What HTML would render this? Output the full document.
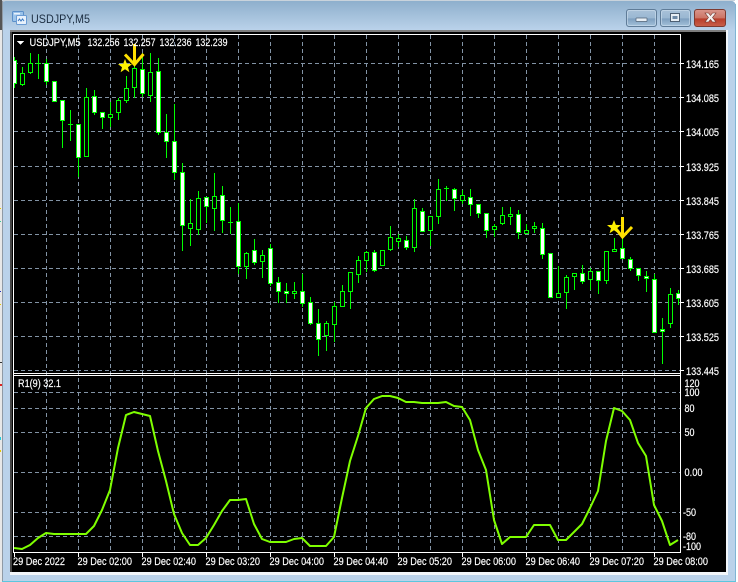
<!DOCTYPE html>
<html><head><meta charset="utf-8"><title>USDJPY,M5</title>
<style>
html,body{margin:0;padding:0;background:#fff;width:738px;height:582px;overflow:hidden}
svg{display:block}
text{font-family:"Liberation Sans",sans-serif;font-size:11px;fill:#fff;stroke:#fff;stroke-width:.18px}
</style></head><body>
<svg width="738" height="582" viewBox="0 0 738 582" xmlns="http://www.w3.org/2000/svg">
<defs>
<linearGradient id="top" x1="0" y1="0" x2="0" y2="1"><stop offset="0" stop-color="#8eafcc"/><stop offset="1" stop-color="#bad2ea"/></linearGradient>
<linearGradient id="btn" x1="0" y1="0" x2="0" y2="1"><stop offset="0" stop-color="#a9c2d9"/><stop offset=".5" stop-color="#9ab7d2"/><stop offset=".55" stop-color="#7e9fbf"/><stop offset="1" stop-color="#a5c3dc"/></linearGradient>
<linearGradient id="cls" x1="0" y1="0" x2="0" y2="1"><stop offset="0" stop-color="#d9968c"/><stop offset=".5" stop-color="#cc7465"/><stop offset=".55" stop-color="#b83d2a"/><stop offset="1" stop-color="#c9604a"/></linearGradient>
<clipPath id="cu"><rect x="14" y="35" width="666" height="338"/></clipPath>
<clipPath id="cl"><rect x="14" y="376" width="666" height="176"/></clipPath>
</defs>
<!-- window -->
<rect width="738" height="582" fill="#fff"/>
<path d="M0 0H4L2 4V30H0Z" fill="#555"/>
<rect x="0" y="30" width="2" height="552" fill="#e8e8e8"/>
<g shape-rendering="crispEdges">
<rect x="0" y="208" width="1" height="1" fill="#e6c800"/><rect x="0" y="221" width="1" height="1" fill="#3c9"/><rect x="0" y="291" width="1" height="1" fill="#23b"/><rect x="0" y="304" width="1" height="1" fill="#e6c800"/><rect x="0" y="362" width="2" height="1" fill="#333"/><rect x="0" y="384" width="2" height="2" fill="#d22"/><rect x="0" y="437" width="1" height="3" fill="#2cd"/><rect x="0" y="450" width="1" height="2" fill="#e6c800"/>
</g>
<path d="M2 581V5Q2 1 6 1H731Q735 1 735.500 5V581Z" fill="#bad2ea"/>
<path d="M2 30V5Q2 1 6 1H731Q735 1 735.500 5V30Z" fill="url(#top)"/>
<rect x="2" y="0" width="733" height="1" fill="#c9d3dc"/>
<rect x="2" y="581" width="734" height="1" fill="#5cc6de"/>
<rect x="2" y="1" width="1" height="580" fill="#8f9aa5"/>
<rect x="735" y="4" width="1" height="577" fill="#7fb5d5"/>
<rect x="10" y="30" width="717" height="2" fill="#7d7d7d"/>
<rect x="10" y="32" width="717" height="541" fill="#000"/>
<rect x="10" y="32" width="2" height="541" fill="#444"/>
<rect x="10" y="572" width="717" height="3" fill="#f2f6fa"/>
<rect x="726" y="30" width="2" height="545" fill="#f2f6fa"/>
<!-- title -->
<rect x="12.500" y="11.500" width="11" height="10" rx="1" fill="#9cc4ea" stroke="#5b8fc9"/>
<rect x="16.500" y="15.500" width="10" height="9" rx="1" fill="#e8f1fb" stroke="#6a9bd3"/>
<path d="M18 21l1.500-2 1.500 2 1.500-2 1.500 2" fill="none" stroke="#3a78c0"/>
<rect x="14" y="13" width="6" height="1.500" fill="#e8f1fb"/>
<text x="31" y="23" textLength="59" lengthAdjust="spacingAndGlyphs" style="fill:#1c2e42;stroke:none;font-size:12px">USDJPY,M5</text>
<!-- buttons -->
<rect x="626.500" y="9.500" width="30" height="17" rx="2.500" fill="url(#btn)" stroke="#5f7c98"/>
<rect x="627.500" y="10.500" width="28" height="15" rx="2" fill="none" stroke="#cfe0ef" stroke-opacity=".6"/>
<rect x="636" y="18" width="11" height="3.500" rx=".5" fill="#e8eff5" stroke="#4d6074" stroke-width=".7"/>
<rect x="660.500" y="9.500" width="30" height="17" rx="2.500" fill="url(#btn)" stroke="#5f7c98"/>
<rect x="661.500" y="10.500" width="28" height="15" rx="2" fill="none" stroke="#cfe0ef" stroke-opacity=".6"/>
<rect x="670.500" y="13.500" width="9" height="8" fill="#e8eff5" stroke="#4d6074"/>
<rect x="672.500" y="16" width="5" height="3" fill="#6d89a6"/>
<rect x="694.500" y="9.500" width="31" height="17" rx="2.500" fill="url(#cls)" stroke="#7d3a30"/>
<path d="M705 13h3.500l2 2.500 2-2.500h3.500l-3.500 4.500 3.500 4.500h-3.500l-2-2.500-2 2.500H705l3.500-4.500z" fill="#f4f0ef" stroke="#6d3028" stroke-width=".6"/>
<!-- grid -->
<g stroke="#8293a5" stroke-dasharray="4 3" fill="none" shape-rendering="crispEdges">
<path d="M14 63.500H680M14 97.500H680M14 131.500H680M14 166.500H680M14 200.500H680M14 234.500H680M14 268.500H680M14 302.500H680M14 336.500H680M14 370.500H680"/>
<path d="M14 392.500H680M14 408.500H680M14 432.500H680M14 472.500H680M14 512.500H680M14 536.500H680"/>
<path d="M46.500 35V552M78.500 35V552M110.500 35V552M142.500 35V552M174.500 35V552M206.500 35V552M238.500 35V552M270.500 35V552M302.500 35V552M334.500 35V552M366.500 35V552M398.500 35V552M430.500 35V552M462.500 35V552M494.500 35V552M526.500 35V552M558.500 35V552M590.500 35V552M622.500 35V552M654.500 35V552"/>
</g>
<!-- candles -->
<g clip-path="url(#cu)" shape-rendering="crispEdges" stroke="#00ff00">
<path fill="none" d="M14.500 57V88M22.500 67V86M30.500 53V74M38.500 54V79M46.500 59V85M62.500 100V148M70.500 110V141M78.500 124V177M86.500 88V157M94.500 90V115M102.500 112V129M110.500 102V127M118.500 98V120M126.500 76V103M134.500 60V98M142.500 53V97M150.500 53V102M158.500 58V135M166.500 114V158M174.500 104V180M182.500 163V251M190.500 199V246M198.500 191V235M206.500 197V223M214.500 173V231M222.500 186V233M230.500 207V234M238.500 203V274M246.500 252V279M254.500 239V265M262.500 250V278M270.500 244V286M278.500 277V303M286.500 283V303M294.500 282V299M302.500 274V307M310.500 297V325M318.500 309V356M326.500 321V351M334.500 302V342M342.500 285V307M350.500 272V309M358.500 256V283M366.500 251V272M374.500 250V272M390.500 226V251M398.500 234V247M406.500 236V250M414.500 199V252M422.500 208V232M430.500 216V246M438.500 179V224M446.500 186V201M454.500 188V211M462.500 190V204M470.500 189V216M478.500 204V218M486.500 213V238M494.500 224V237M502.500 207V225M510.500 207V225M518.500 210V239M526.500 224V234M534.500 222V233M542.500 223V259M558.500 266V298M566.500 275V309M574.500 273V290M582.500 265V284M590.500 268V290M598.500 271V294M606.500 251V284M614.500 238V252M622.500 237V259M630.500 257V271M638.500 268V281M646.500 271V292M654.500 274V333M662.500 318V364M670.500 288V328M678.500 290V305"/>
<path fill="none" d="M36 63.500H41M68 124.500H73M228 222.500H233M444 188.500H449"/>
<path fill="#000" d="M20.500 73.500h4v11h-4zM28.500 63.500h4v9h-4zM84.500 97.500h4v59h-4zM108.500 114.500h4v3h-4zM116.500 100.500h4v12h-4zM124.500 88.500h4v12h-4zM132.500 68.500h4v19h-4zM148.500 72.500h4v23h-4zM188.500 223.500h4v5h-4zM196.500 198.500h4v31h-4zM212.500 196.500h4v12h-4zM244.500 253.500h4v13h-4zM260.500 255.500h4v6h-4zM292.500 291.500h4v2h-4zM324.500 323.500h4v12h-4zM332.500 306.500h4v18h-4zM340.500 291.500h4v15h-4zM348.500 272.500h4v19h-4zM356.500 260.500h4v14h-4zM364.500 252.500h4v8h-4zM380.500 250.500h4v15h-4zM388.500 237.500h4v12h-4zM396.500 238.500h4v3h-4zM412.500 208.500h4v39h-4zM428.500 216.500h4v14h-4zM436.500 189.500h4v27h-4zM460.500 195.500h4v5h-4zM492.500 226.500h4v3h-4zM500.500 215.500h4v8h-4zM508.500 214.500h4v2h-4zM524.500 230.500h4v3h-4zM532.500 226.500h4v2h-4zM556.500 293.500h4v4h-4zM564.500 277.500h4v15h-4zM572.500 273.500h4v3h-4zM588.500 271.500h4v8h-4zM604.500 251.500h4v29h-4zM612.500 249.500h4v2h-4zM668.500 294.500h4v29h-4z"/>
<path fill="#fff" d="M12.500 60.500h4v23h-4zM44.500 63.500h4v18h-4zM52.500 81.500h4v20h-4zM60.500 100.500h4v20h-4zM76.500 124.500h4v33h-4zM92.500 96.500h4v16h-4zM100.500 112.500h4v5h-4zM140.500 69.500h4v24h-4zM156.500 71.500h4v61h-4zM164.500 132.500h4v9h-4zM172.500 141.500h4v31h-4zM180.500 172.500h4v53h-4zM204.500 197.500h4v9h-4zM220.500 195.500h4v25h-4zM236.500 221.500h4v45h-4zM252.500 250.500h4v12h-4zM268.500 248.500h4v35h-4zM276.500 282.500h4v9h-4zM284.500 291.500h4v2h-4zM300.500 291.500h4v12h-4zM308.500 302.500h4v21h-4zM316.500 323.500h4v16h-4zM372.500 252.500h4v18h-4zM404.500 240.500h4v7h-4zM420.500 211.500h4v20h-4zM452.500 189.500h4v9h-4zM468.500 197.500h4v7h-4zM476.500 204.500h4v9h-4zM484.500 213.500h4v17h-4zM516.500 214.500h4v18h-4zM540.500 228.500h4v26h-4zM548.500 253.500h4v44h-4zM580.500 273.500h4v8h-4zM596.500 271.500h4v9h-4zM620.500 248.500h4v10h-4zM628.500 259.500h4v9h-4zM636.500 268.500h4v7h-4zM644.500 276.500h4v2h-4zM652.500 279.500h4v53h-4zM660.500 329.500h4v2h-4zM676.500 293.500h4v5h-4z"/>
</g>
<!-- signals -->
<g fill="none" stroke="#ffe000" stroke-width="3">
<path d="M134.500 44V65"/><path d="M125 54.500L134.500 64.500L143.500 54"/>
<path d="M622.500 217V237"/><path d="M615 227.500L622.500 237L632 227"/>
</g>
<path fill="#fff200" d="M125 59l1.900 4.900 5.100.2-4 3.100 1.400 5-4.400-2.900-4.400 2.900 1.400-5-4-3.100 5.100-.2z"/>
<path fill="#fff200" d="M614 220l1.900 4.900 5.100.2-4 3.100 1.400 5-4.400-2.900-4.400 2.900 1.400-5-4-3.100 5.100-.2z"/>
<!-- indicator line -->
<path clip-path="url(#cl)" fill="none" stroke="#7fff00" stroke-width="2" stroke-linejoin="round" d="M14 548L22 549L30 545L38 538L46 533L54 534L62 534L70 534L78 534L86 534L94 526L102 510L110 490L118 448L126 415L134 412L142 414L150 416L158 451L166 481L174 514L182 533L190 545L198 545L206 538L214 525L222 511L230 500L238 500L246 499L254 524L262 539L270 542L278 542L286 542L294 539L302 538L310 546L318 546L326 546L334 537L342 498L350 461L358 436L366 408L374 399L382 396L390 396L398 398L406 402L414 402L422 403L430 403L438 403L446 402L454 406L462 407L470 420L478 450L486 470L494 520L502 544L510 537L518 537L526 537L534 525L542 525L550 525L558 540L566 540L574 532L582 524L590 508L598 491L606 441L614 408L622 411L630 420L638 443L646 456L654 505L662 521L670 545L678 540"/>
<!-- frame -->
<g fill="#fff" shape-rendering="crispEdges">
<rect x="13" y="34" width="668" height="1"/>
<rect x="13" y="34" width="1" height="519"/>
<rect x="680" y="34" width="1" height="519"/>
<rect x="13" y="373" width="668" height="1"/>
<rect x="13" y="375" width="668" height="1"/>
<rect x="13" y="552" width="668" height="1"/>
<path d="M681 63h3v1h-3zM681 97h3v1h-3zM681 131h3v1h-3zM681 166h3v1h-3zM681 200h3v1h-3zM681 234h3v1h-3zM681 268h3v1h-3zM681 302h3v1h-3zM681 336h3v1h-3zM681 370h3v1h-3z"/>
<path d="M14 553h1v4h-1zM78 553h1v4h-1zM142 553h1v4h-1zM206 553h1v4h-1zM270 553h1v4h-1zM334 553h1v4h-1zM398 553h1v4h-1zM462 553h1v4h-1zM526 553h1v4h-1zM590 553h1v4h-1zM654 553h1v4h-1z"/>
<path d="M17 41h7l-3.500 4z"/>
</g>
<!-- header -->
<text x="29.500" y="46" textLength="51" lengthAdjust="spacingAndGlyphs">USDJPY,M5</text>
<text x="87.500" y="46" textLength="32" lengthAdjust="spacingAndGlyphs">132.256</text>
<text x="123.500" y="46" textLength="32" lengthAdjust="spacingAndGlyphs">132.257</text>
<text x="159.500" y="46" textLength="32" lengthAdjust="spacingAndGlyphs">132.236</text>
<text x="195.500" y="46" textLength="32" lengthAdjust="spacingAndGlyphs">132.239</text>
<text x="18" y="387" textLength="43" lengthAdjust="spacingAndGlyphs">R1(9) 32.1</text>
<!-- price axis -->
<g>
<text x="686" y="68" textLength="33" lengthAdjust="spacingAndGlyphs">134.165</text>
<text x="686" y="102" textLength="33" lengthAdjust="spacingAndGlyphs">134.085</text>
<text x="686" y="136" textLength="33" lengthAdjust="spacingAndGlyphs">134.005</text>
<text x="686" y="171" textLength="33" lengthAdjust="spacingAndGlyphs">133.925</text>
<text x="686" y="205" textLength="33" lengthAdjust="spacingAndGlyphs">133.845</text>
<text x="686" y="239" textLength="33" lengthAdjust="spacingAndGlyphs">133.765</text>
<text x="686" y="273" textLength="33" lengthAdjust="spacingAndGlyphs">133.685</text>
<text x="686" y="307" textLength="33" lengthAdjust="spacingAndGlyphs">133.605</text>
<text x="686" y="341" textLength="33" lengthAdjust="spacingAndGlyphs">133.525</text>
<text x="686" y="375" textLength="33" lengthAdjust="spacingAndGlyphs">133.445</text>
<text x="684.500" y="387" textLength="15" lengthAdjust="spacingAndGlyphs">120</text>
<text x="684.500" y="396" textLength="15" lengthAdjust="spacingAndGlyphs">100</text>
<text x="684.500" y="412" textLength="10" lengthAdjust="spacingAndGlyphs">80</text>
<text x="684.500" y="436" textLength="10" lengthAdjust="spacingAndGlyphs">50</text>
<text x="684.500" y="476" textLength="18" lengthAdjust="spacingAndGlyphs">0.00</text>
<text x="683" y="516" textLength="13" lengthAdjust="spacingAndGlyphs">-50</text>
<text x="683" y="540" textLength="13" lengthAdjust="spacingAndGlyphs">-80</text>
<text x="683" y="550" textLength="18" lengthAdjust="spacingAndGlyphs">-100</text>
</g>
<!-- time axis -->
<g>
<text x="13" y="565" textLength="52" lengthAdjust="spacingAndGlyphs">29 Dec 2022</text>
<text x="77.500" y="565" textLength="54.500" lengthAdjust="spacingAndGlyphs">29 Dec 02:00</text>
<text x="141.500" y="565" textLength="54.500" lengthAdjust="spacingAndGlyphs">29 Dec 02:40</text>
<text x="205.500" y="565" textLength="54.500" lengthAdjust="spacingAndGlyphs">29 Dec 03:20</text>
<text x="269.500" y="565" textLength="54.500" lengthAdjust="spacingAndGlyphs">29 Dec 04:00</text>
<text x="333.500" y="565" textLength="54.500" lengthAdjust="spacingAndGlyphs">29 Dec 04:40</text>
<text x="397.500" y="565" textLength="54.500" lengthAdjust="spacingAndGlyphs">29 Dec 05:20</text>
<text x="461.500" y="565" textLength="54.500" lengthAdjust="spacingAndGlyphs">29 Dec 06:00</text>
<text x="525.500" y="565" textLength="54.500" lengthAdjust="spacingAndGlyphs">29 Dec 06:40</text>
<text x="589.500" y="565" textLength="54.500" lengthAdjust="spacingAndGlyphs">29 Dec 07:20</text>
<text x="653.500" y="565" textLength="54.500" lengthAdjust="spacingAndGlyphs">29 Dec 08:00</text>
</g>
</svg>
</body></html>
